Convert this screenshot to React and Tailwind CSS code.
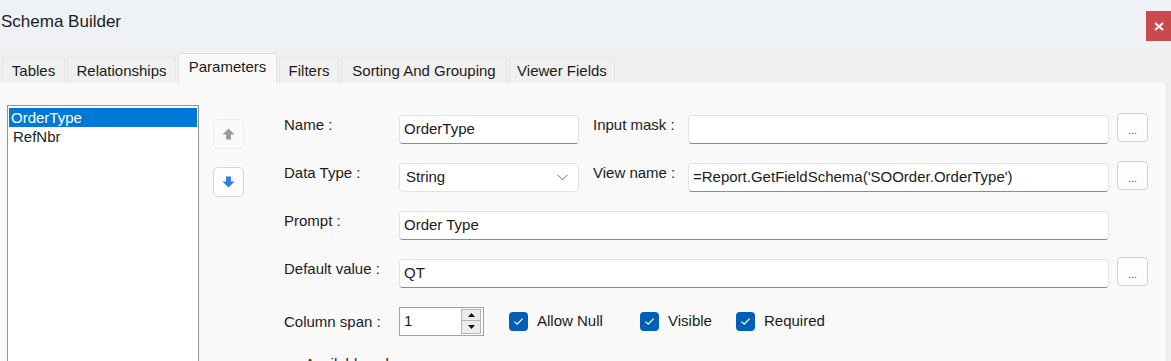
import React from "react";

const tabs = [
  { label: "Tables", w: "w-[63px]" },
  { label: "Relationships", w: "w-[109px]" },
  { label: "Parameters", w: "w-[99px]", active: true },
  { label: "Filters", w: "w-[60px]" },
  { label: "Sorting And Grouping", w: "w-[166px]" },
  { label: "Viewer Fields", w: "w-[106px]" },
];

const box = "h-[29px] bg-white border border-[#e3e3e3] border-b-[#8c8c8c] rounded-[4px] pl-[4px] flex items-center text-[15px]";

function DotsButton() {
  return (
    <button className="-mt-[2px] ml-[8px] w-[31px] h-[29px] rounded-[4px] border border-[#d3d3d3] bg-[#fdfdfd] text-[11px] text-[#555] leading-none pt-[6px]">
      ...
    </button>
  );
}

function Label({ children, w = "w-[115px]" }) {
  return <div className={`${w} shrink-0 h-[20px] leading-[20px]`}>{children}</div>;
}

function Check({ label }) {
  return (
    <div className="flex items-center">
      <div className="w-[19px] h-[19px] rounded-[4px] bg-[#005fb8] flex items-center justify-center">
        <svg width="11" height="9" viewBox="0 0 11 9">
          <path d="M1.5 4.6 L4.2 7.2 L9.6 1.6" fill="none" stroke="white" strokeWidth="1.3" />
        </svg>
      </div>
      <span className="ml-[9px]">{label}</span>
    </div>
  );
}

function Arrow({ up, color }) {
  return (
    <svg width="13" height="12" viewBox="0 0 13 12" className={up ? "" : "rotate-180"}>
      <path d="M6.5 0.5 L12.5 6.5 L9 6.5 L9 11.5 L4 11.5 L4 6.5 L0.5 6.5 Z" fill={color} />
    </svg>
  );
}

export default function App() {
  return (
    <div className="w-[1171px] h-[361px] overflow-hidden bg-[#f0f0f0] text-[#1b1b1b] font-['Liberation_Sans',Arial,sans-serif]">
      {/* title bar */}
      <div className="h-[44px] bg-[#eef2f7] flex items-start justify-between">
        <div className="pl-[1px] pt-[9px] text-[17px]">Schema Builder</div>
        <div className="mt-[11px] w-[25px] h-[30px] bg-[#c9494c] flex items-center justify-center">
          <svg width="10" height="9" viewBox="0 0 10 9">
            <path d="M1 1 L9 8 M9 1 L1 8" stroke="white" strokeWidth="2" />
          </svg>
        </div>
      </div>

      {/* tabs */}
      <div className="h-[39px] flex items-end pl-[2px] gap-[2px] text-[15px]">
        {tabs.map((t) =>
          t.active ? (
            <div key={t.label} className={`${t.w} h-[30px] bg-[#f9f9f9] border border-b-0 border-[#e2e2e2] flex items-center justify-center pb-[3px]`}>
              {t.label}
            </div>
          ) : (
            <div key={t.label} className={`${t.w} h-[26px] bg-[#f0f0f0] border border-b-0 border-[#e6e6e6] flex items-center justify-center pt-[1px]`}>
              {t.label}
            </div>
          )
        )}
      </div>

      {/* panel */}
      <div className="w-[1167px] h-[300px] bg-[#f9f9f9] border-r border-[#e4e4e4] flex text-[15px]">
        {/* list */}
        <div className="ml-[7px] mt-[22px] w-[192px] h-[290px] bg-white border border-[#8f9399] pt-[2px] px-[1px]">
          <div className="h-[19px] leading-[19px] bg-[#0078d7] text-white pl-[2px]">OrderType</div>
          <div className="h-[19px] leading-[19px] pl-[4px]">RefNbr</div>
        </div>

        {/* move buttons */}
        <div className="ml-[14px] mt-[36px] flex flex-col gap-[18px]">
          <div className="w-[31px] h-[30px] rounded-[5px] border border-[#ececec] bg-[#fafafa] flex items-center justify-center">
            <Arrow up color="#9a9a9a" />
          </div>
          <div className="w-[31px] h-[30px] rounded-[5px] border border-[#d6d6d6] bg-[#fdfdfd] flex items-center justify-center">
            <Arrow color="#2f7de0" />
          </div>
        </div>

        {/* form */}
        <div className="ml-[40px] pt-[32px] flex flex-col gap-[19px]">
          <div className="flex items-start h-[29px]">
            <Label>Name :</Label>
            <div className={`${box} w-[180px]`}>OrderType</div>
            <div className="w-[14px]" />
            <Label w="w-[95px]">Input mask :</Label>
            <div className={`${box} w-[421px]`} />
            <DotsButton />
          </div>

          <div className="flex items-start h-[29px]">
            <Label>Data Type :</Label>
            <div className={`${box} w-[180px] justify-between pr-[10px] border-b-[#e3e3e3]`}>
              <span className="pl-[2px]">String</span>
              <svg width="11" height="7" viewBox="0 0 11 7">
                <path d="M0.5 0.8 L5.5 5.8 L10.5 0.8" fill="none" stroke="#6b6b6b" strokeWidth="1" />
              </svg>
            </div>
            <div className="w-[14px]" />
            <Label w="w-[95px]">View name :</Label>
            <div className={`${box} w-[421px]`}>=Report.GetFieldSchema('SOOrder.OrderType')</div>
            <DotsButton />
          </div>

          <div className="flex items-start h-[29px]">
            <Label>Prompt :</Label>
            <div className={`${box} w-[710px]`}>Order Type</div>
          </div>

          <div className="flex items-start h-[29px]">
            <Label>Default value :</Label>
            <div className={`${box} w-[710px]`}>QT</div>
            <DotsButton />
          </div>

          <div className="flex items-center h-[29px]">
            <Label>Column span :</Label>
            <div className="w-[85px] h-[29px] bg-white border border-[#a3a3a3] flex items-center justify-between pl-[4px] pr-[2px]">
              <span>1</span>
              <div className="w-[20px] h-[25px] flex flex-col">
                <div className="h-[12px] border border-[#b4b4b4] bg-[#ececec] flex items-center justify-center">
                  <svg width="7" height="4" viewBox="0 0 7 4"><path d="M3.5 0 L7 4 L0 4 Z" fill="#111" /></svg>
                </div>
                <div className="h-[13px] border border-t-0 border-[#b4b4b4] bg-[#ececec] flex items-center justify-center">
                  <svg width="7" height="4" viewBox="0 0 7 4"><path d="M0 0 L7 0 L3.5 4 Z" fill="#111" /></svg>
                </div>
              </div>
            </div>
            <div className="ml-[25px] w-[131px]"><Check label="Allow Null" /></div>
            <div className="w-[96px]"><Check label="Visible" /></div>
            <Check label="Required" />
          </div>

          <div className="pl-[21px] -mt-[1px] h-[20px] leading-[20px]">Available values :</div>
        </div>
      </div>
    </div>
  );
}
